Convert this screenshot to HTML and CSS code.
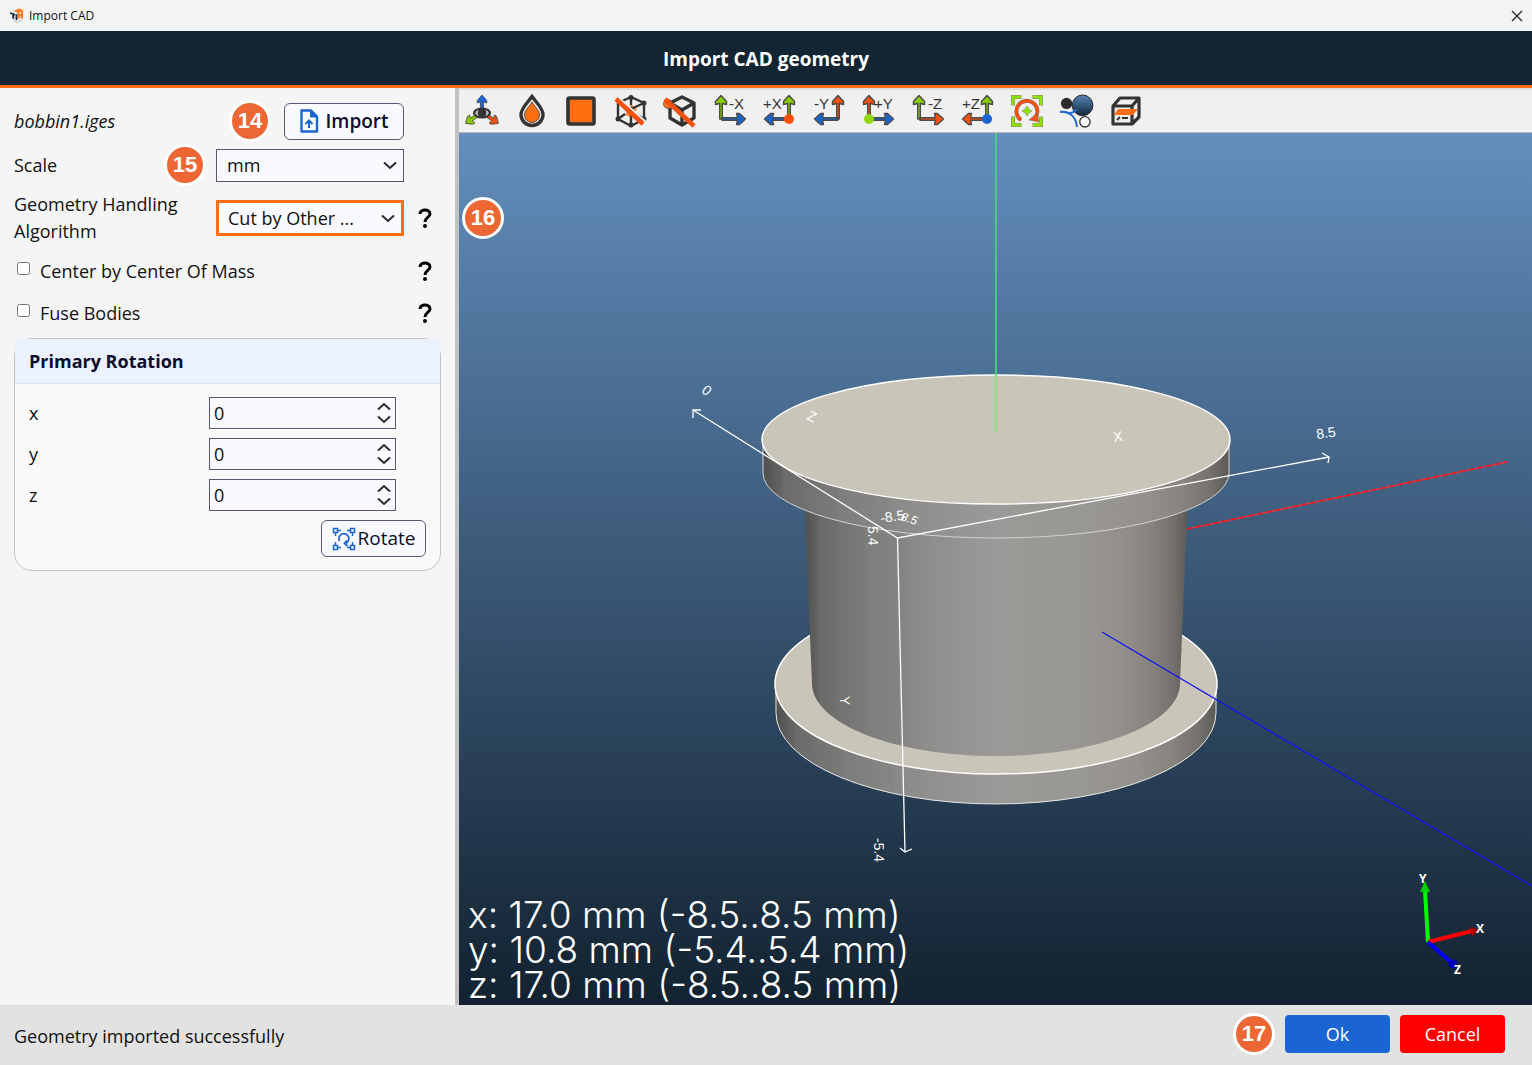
FILE: index.html
```html
<!DOCTYPE html>
<html lang="en">
<head>
<meta charset="utf-8">
<title>Import CAD</title>
<link rel="stylesheet" href="styles.css">
</head>
<body>
<svg class="defs" aria-hidden="true">
  <defs>
    <path id="arrow" d="M-1.300 0V-15.500L-5.500 -14.500V-17.500L0 -23.500L5.500 -17.500V-14.500L1.300 -15.500V0Z" stroke="#4a4a4a" stroke-width="1.400" stroke-linejoin="round"/>
    <path id="arrow-short" d="M-1.600 0V-8L-4.800 -7V-9.500L0 -15L4.800 -9.500V-7L1.600 -8V0Z" stroke="#4a4a4a" stroke-width=".8" stroke-linejoin="round"/>
    <path id="chevron" d="M1 1.500L7 7L13 1.500" fill="none" stroke="#2b2b2b" stroke-width="2"/>
  </defs>
</svg>

<div class="window">
  <div class="titlebar">
    <svg class="app-icon" viewBox="0 0 16 16" aria-hidden="true">
      <path d="M1 4.500L6.500 6V8L5.500 7.700V12L3.500 11V7L1 6.300Z" fill="#14283a"/>
      <path d="M7 6.500L9 7V13L7 12.500Z" fill="#14283a"/>
      <path d="M6 2.500L11 .5L15 2.500V12L12.500 10.500V8.500L11.500 8.200V12L9 10V5L6 4Z" fill="#ff7a1a"/>
      <path d="M11 4L13 4.500V6L11 6Z" fill="#f3f3f3"/>
      <path d="M5 13L9 15.300L14 12.500" fill="none" stroke="#a8b0b4"/>
    </svg>
    <span>Import CAD</span>
    <button class="close" aria-label="Close"><svg viewBox="0 0 12 12"><path d="M1 1L11 11M11 1L1 11" stroke="#222" stroke-width="1.200"/></svg></button>
  </div>

  <header class="header"><h1>Import CAD geometry</h1></header>

  <main class="main">
    <form class="panel" id="import-form">
      <div class="row row-file">
        <em class="file">bobbin1.iges</em>
        <div class="file-actions">
          <span class="step">14</span>
          <button type="button" class="btn btn-import">
            <svg viewBox="0 0 20 24" width="20" height="24" aria-hidden="true"><path d="M2.500 1.500H12L18 7.500V22.500H2.500Z" fill="none" stroke="#1b65d2" stroke-width="2.400" stroke-linejoin="round"/><path d="M11.500 1.500V8H18Z" fill="#1b65d2" stroke="#1b65d2"/><path d="M10 19V12M6.500 15L10 11.500L13.500 15" fill="none" stroke="#1b65d2" stroke-width="2"/></svg>
            Import
          </button>
        </div>
      </div>

      <div class="row">
        <div class="label-step"><label for="scale">Scale</label><span class="step">15</span></div>
        <div class="select"><select id="scale"><option>mm</option><option>cm</option><option>m</option></select><svg viewBox="0 0 14 9"><use href="#chevron"/></svg></div>
      </div>

      <div class="row row-tall">
        <label for="algorithm">Geometry Handling Algorithm</label>
        <div class="select select-focus"><select id="algorithm"><option>Cut by Other ...</option></select><svg viewBox="0 0 14 9"><use href="#chevron"/></svg></div>
        <button type="button" class="help" aria-label="About the algorithm"><svg viewBox="0 0 14 20"><path d="M2 6C2 0.500 12 0.500 12 6C12 9.500 7 9.500 7 14" fill="none" stroke="#000" stroke-width="3"/><circle cx="7" cy="18" r="2"/></svg></button>
      </div>

      <div class="row row-check">
        <label class="check"><input type="checkbox">Center by Center Of Mass</label>
        <button type="button" class="help" aria-label="About centering"><svg viewBox="0 0 14 20"><path d="M2 6C2 0.500 12 0.500 12 6C12 9.500 7 9.500 7 14" fill="none" stroke="#000" stroke-width="3"/><circle cx="7" cy="18" r="2"/></svg></button>
      </div>
      <div class="row row-check">
        <label class="check"><input type="checkbox">Fuse Bodies</label>
        <button type="button" class="help" aria-label="About fusing"><svg viewBox="0 0 14 20"><path d="M2 6C2 0.500 12 0.500 12 6C12 9.500 7 9.500 7 14" fill="none" stroke="#000" stroke-width="3"/><circle cx="7" cy="18" r="2"/></svg></button>
      </div>

      <section class="card">
        <h2>Primary Rotation</h2>
        <div class="card-body">
          <div class="axis-row"><label for="rx">x</label><div class="number"><input id="rx" type="number" value="0"><span class="spin"><svg class="flip" viewBox="0 0 14 9"><use href="#chevron"/></svg><svg viewBox="0 0 14 9"><use href="#chevron"/></svg></span></div></div>
          <div class="axis-row"><label for="ry">y</label><div class="number"><input id="ry" type="number" value="0"><span class="spin"><svg class="flip" viewBox="0 0 14 9"><use href="#chevron"/></svg><svg viewBox="0 0 14 9"><use href="#chevron"/></svg></span></div></div>
          <div class="axis-row"><label for="rz">z</label><div class="number"><input id="rz" type="number" value="0"><span class="spin"><svg class="flip" viewBox="0 0 14 9"><use href="#chevron"/></svg><svg viewBox="0 0 14 9"><use href="#chevron"/></svg></span></div></div>
          <button type="button" class="btn btn-rotate">
            <svg viewBox="0 0 24 24" width="24" height="24" fill="none" stroke="#1b65d2" stroke-width="1.500" aria-hidden="true"><path d="M1.500 1.500h4v4h-4zM18.500 1.500h4v4h-4zM1.500 18.500h4v4h-4zM18.500 18.500h4v4h-4zM6 3.500h3M15 3.500h3M6 20.500h3M15 20.500h3M3.500 6v3M3.500 15v3M20.500 6v3M20.500 15v3"/><path d="M7.500 14A5 5 0 1 1 13 16.500M15 13.500L12.500 16.500L15.500 19" stroke-width="1.800"/></svg>
            Rotate
          </button>
        </div>
      </section>
    </form>

    <div class="divider"></div>

    <section class="viewer">
      <div class="toolbar">
        <button class="tool" aria-label="Free view"><svg viewBox="0 0 32 32"><use href="#arrow-short" transform="translate(16 15)" fill="#1b65d2"/><use href="#arrow-short" transform="translate(12 20) rotate(236)" fill="#8c0"/><use href="#arrow-short" transform="translate(20 20) rotate(124)" fill="#f4510f"/><ellipse cx="16" cy="18" rx="9" ry="5.500" fill="#333"/><path d="M9 18Q10 15.500 12.500 14.800Q11 18 12.500 21.200Q10 20.500 9 18ZM19.500 14.800Q22 15.500 23 18Q22 20.500 19.500 21.200Q21 18 19.500 14.800Z" fill="#bbb"/></svg></button>
        <button class="tool" aria-label="Opacity"><svg viewBox="0 0 32 32"><path d="M16 1.500C19 6 27 13 27 19.500A11 11 0 0 1 5 19.500C5 13 13 6 16 1.500Z" fill="#eee" stroke="#333" stroke-width="3.400"/><path d="M16 7C18 11 23.500 15 23.500 20A7.500 7.500 0 0 1 8.500 20C8.500 15 14 11 16 7Z" fill="#ff6f0f" stroke="#333" stroke-width=".8"/></svg></button>
        <button class="tool" aria-label="Faces"><svg viewBox="0 0 32 32"><rect x="3" y="3" width="26" height="26" rx="1.500" fill="#ff6f0f" stroke="#333" stroke-width="3.600"/></svg></button>
        <button class="tool" aria-label="Hide vertices"><svg viewBox="0 0 32 32" fill="none" stroke="#333"><path d="M16 9L22 14L18 23L10 20Z" fill="#ff8c42" stroke="none"/><path d="M16 2L29 8V24L16 31L3 24V8ZM3 8L16 14L29 8M16 14V31M16 2V10M3 24L10 19M29 24L21 19" stroke-width="2.400"/><g fill="#333" stroke-width="2"><circle cx="16" cy="2.500" r="1.500"/><circle cx="29" cy="8" r="1.500"/><circle cx="29" cy="24" r="1.500"/><circle cx="16" cy="30" r="1.500"/><circle cx="3" cy="24" r="1.500"/><circle cx="16" cy="14" r="1.500"/></g><path d="M4 3L31 27" stroke="#eee" stroke-width="2"/><path d="M1 4L28 29" stroke="#f4510f" stroke-width="4.500"/></svg></button>
        <button class="tool" aria-label="Hide edges"><svg viewBox="0 0 32 32" fill="none" stroke="#333"><path d="M18 2L30 8V23L18 30L6 23V8ZM6 8L18 15L30 8M18 15V30" stroke-width="3.400" stroke-linejoin="round"/><circle cx="4" cy="9" r="4.500" fill="#f4741f" stroke="#555" stroke-width=".8"/><path d="M1 4L30 31" stroke="#f4510f" stroke-width="4.500"/></svg></button>
        <button class="tool" aria-label="View minus X"><svg viewBox="0 0 32 32"><use href="#arrow" transform="translate(7 24)" fill="#8c0"/><use href="#arrow" transform="translate(8 24) rotate(90)" fill="#1b65d2"/><text x="15" y="14">-X</text></svg></button>
        <button class="tool" aria-label="View plus X"><svg viewBox="0 0 32 32"><use href="#arrow" transform="translate(26 24)" fill="#8c0"/><use href="#arrow" transform="translate(25 24) rotate(270)" fill="#1b65d2"/><circle cx="26" cy="24" r="5" fill="#ff4d0a"/><text x="0" y="14">+X</text></svg></button>
        <button class="tool" aria-label="View minus Y"><svg viewBox="0 0 32 32"><use href="#arrow" transform="translate(25 24)" fill="#f4510f"/><use href="#arrow" transform="translate(25 24) rotate(270)" fill="#1b65d2"/><text x="1" y="14">-Y</text></svg></button>
        <button class="tool" aria-label="View plus Y"><svg viewBox="0 0 32 32"><use href="#arrow" transform="translate(7 24)" fill="#f4510f"/><use href="#arrow" transform="translate(8 24) rotate(90)" fill="#1b65d2"/><circle cx="7" cy="24" r="5" fill="#8fd60a"/><text x="12" y="14">+Y</text></svg></button>
        <button class="tool" aria-label="View minus Z"><svg viewBox="0 0 32 32"><use href="#arrow" transform="translate(7 24)" fill="#8c0"/><use href="#arrow" transform="translate(8 24) rotate(90)" fill="#f4510f"/><text x="16" y="14">-Z</text></svg></button>
        <button class="tool" aria-label="View plus Z"><svg viewBox="0 0 32 32"><use href="#arrow" transform="translate(26 24)" fill="#8c0"/><use href="#arrow" transform="translate(25 24) rotate(270)" fill="#f4510f"/><circle cx="26" cy="24" r="5" fill="#1b65d2"/><text x="1" y="14">+Z</text></svg></button>
        <button class="tool" aria-label="Reset view"><svg viewBox="0 0 32 32" fill="none"><path d="M2 10.500V2H10.500M21.500 2H30V10.500M30 21.500V30H21.500M10.500 30H2V21.500" stroke="#888" stroke-width="4"/><path d="M2 10V2H10M22 2H30V10M30 22V30H22M10 30H2V22" stroke="#8fe000" stroke-width="2.800"/><path d="M10 25A10.500 10.500 0 1 1 24 23" stroke="#777" stroke-width="4"/><path d="M10 25A10.500 10.500 0 1 1 24 23" stroke="#f4510f" stroke-width="3"/><path d="M18 25L28 27L26 18Z" fill="#f4510f" stroke="#777" stroke-width=".6"/><path d="M16 11L18 14L21 16L18 18L16 21L14 18L11 16L14 14Z" fill="#8fe000" stroke="#999" stroke-width=".8"/></svg></button>
        <button class="tool" aria-label="Background"><svg viewBox="0 0 34 34"><defs><linearGradient id="ball" x2="0" y2="1"><stop stop-color="#5585b7"/><stop offset="1" stop-color="#14283a"/></linearGradient></defs><circle cx="7" cy="9" r="6" fill="#2b2b2b"/><circle cx="24" cy="11" r="11" fill="url(#ball)" stroke="#222"/><path d="M0 18C9 17 17 22 18 34M8 19.500Q15 19 18 15" fill="none" stroke="#1b65d2" stroke-width="2"/><circle cx="26.500" cy="28.500" r="5.500" fill="#fff" stroke="#333" stroke-width="1.400"/></svg></button>
        <button class="tool" aria-label="Clip plane"><svg viewBox="0 0 32 32" fill="none" stroke="#333" stroke-width="3.200"><path d="M3 11H22V29H3ZM3 11L10 3H29V22L22 29M22 11L29 3" stroke-linejoin="round"/><path d="M7 25L10 22M12 23H18" stroke-width="2"/><path d="M4 20L8 14H28L23 20Z" fill="#ff6f0f" stroke="none"/></svg></button>
      </div>

      <div class="canvas">
        <svg class="scene" viewBox="0 0 1073 872" role="img" aria-label="Bobbin model">
          <defs>
            <linearGradient id="metal">
              <stop stop-color="#50504f"/><stop offset=".04" stop-color="#656564"/><stop offset=".04" stop-color="#6a6a69"/><stop offset=".1" stop-color="#737372"/><stop offset=".16" stop-color="#7a7a79"/><stop offset=".16" stop-color="#7d7d7c"/><stop offset=".27" stop-color="#868685"/><stop offset=".27" stop-color="#898987"/><stop offset=".4" stop-color="#949391"/><stop offset=".5" stop-color="#9b9a98"/><stop offset=".7" stop-color="#999793"/><stop offset=".82" stop-color="#94918d"/><stop offset=".9" stop-color="#87847f"/><stop offset=".96" stop-color="#75726e"/><stop offset="1" stop-color="#5c5a56"/>
            </linearGradient>
          </defs>
          <g stroke="#e8e8e6" stroke-width="1">
            <path d="M317 551V580A220 91 0 0 0 757 580V551Z" fill="url(#metal)"/>
            <ellipse cx="537" cy="551" rx="221" ry="90" fill="#c9c5b9" stroke="#fff" stroke-width="1.500"/>
          </g>
          <path d="M345 360L353 550C353 591 436 623 537 623C638 623 721 591 721 550L729 360Z" fill="url(#metal)"/>
          <path d="M304 307V340A233 65 0 0 0 770 340V307Z" fill="url(#metal)" stroke="#d2d2d0"/>
          <ellipse cx="537" cy="306.500" rx="234" ry="64.500" fill="#c9c5b9" stroke="#fff" stroke-width="1.500"/>
          <path d="M537 0V242" stroke="#43d47c" stroke-width="1.800"/><path d="M537 242V299" stroke="#86e67b" stroke-width="1.800"/>
          <path d="M728 396L1048 329" stroke="#e0354a" stroke-width="1.600"/><path d="M728 396L1048 329" stroke="#f01818" stroke-width="1.600" stroke-dasharray="5 4"/>
          <path d="M643 499L1073 753" stroke="#1414f4" stroke-width="1.300"/>
          <g fill="none" stroke="#fff" stroke-width="1.300">
            <path d="M234 277L438.500 405L870 324M438.500 405L446 719"/>
            <path d="M234 285V277H242M863 320L870 324L869 330M441 715L446 719L453 716"/>
          </g>
          <g class="ticks">
            <text transform="translate(242 260) rotate(25)" font-style="italic">0</text>
            <text transform="translate(347 286) rotate(25)">Z</text>
            <text transform="translate(655 309) rotate(-8)">X</text>
            <text transform="translate(858 306) rotate(-8)">8.5</text>
            <text transform="translate(422 390) rotate(-8)">-8.5</text>
            <text transform="translate(441 387) rotate(18)" class="tick-small">8.5</text>
            <text transform="translate(409 393) rotate(89)">5.4</text>
            <text transform="translate(415 705) rotate(89)">-5.4</text>
            <text transform="translate(381 563) rotate(89)">Y</text>
          </g>
        </svg>

        <span class="step step-canvas">16</span>

        <div class="dimensions">
          <div>x: 17.0 mm (-8.5..8.5 mm)</div>
          <div>y: 10.8 mm (-5.4..5.4 mm)</div>
          <div>z: 17.0 mm (-8.5..8.5 mm)</div>
        </div>

        <svg class="triad" viewBox="0 0 80 110" aria-hidden="true">
          <path d="M18 72L15 20" stroke="#0f0" stroke-width="4"/><path d="M10 22L15 11L20 22Z" fill="#00d000"/>
          <path d="M18 72L62 61" stroke="#f00" stroke-width="4"/><path d="M60 57L70 60L62 66Z" fill="#b00000"/>
          <path d="M18 72L42 93" stroke="#00f" stroke-width="4"/><circle cx="43" cy="94" r="4.500" fill="#0000b8"/>
          <text x="9" y="13">Y</text><text x="66" y="63">X</text><text x="44" y="104">Z</text>
        </svg>
      </div>
    </section>
  </main>

  <footer class="footer">
    <output>Geometry imported successfully</output>
    <span class="step">17</span>
    <button class="action ok">Ok</button>
    <button class="action cancel">Cancel</button>
  </footer>
</div>
</body>
</html>
```

FILE: styles.css
```css
* { box-sizing: border-box; }

body {
  margin: 0;
  font-family: "Open Sans", "Noto Sans", sans-serif;
  font-size: 18px;
  line-height: 27px;
  color: #111;
}

button, input, select { font: inherit; color: inherit; margin: 0; }
button { cursor: pointer; }
h1, h2 { margin: 0; }
svg { display: block; }
.defs { position: absolute; width: 0; height: 0; }

.window {
  display: grid;
  grid-template-rows: 31px 57px 1fr 60px;
  min-height: 100vh;
}

.titlebar {
  display: flex;
  align-items: center;
  gap: 5px;
  padding: 0 9px;
  background: #f3f3f3;
  font-size: 12px;
  line-height: 16px;
}
.app-icon { width: 15px; height: 15px; }
.close { margin-left: auto; padding: 0; border: 0; background: none; }
.close svg { width: 12px; height: 12px; }

.header {
  display: flex;
  align-items: center;
  justify-content: center;
  padding-top: 2px;
  background: #132433;
  border-bottom: 3px solid #ff6f0f;
  color: #fff;
}
.header h1 { font-size: 19px; font-weight: 700; line-height: 27px; }

.main { display: grid; grid-template-columns: minmax(320px, 455px) 4px 1fr; }
.divider { background: #c2c2c2; }

.panel { padding: 12px 14px; background: #f5f5f5; }
.row {
  display: grid;
  grid-template-columns: 202px 188px 1fr;
  align-items: center;
  min-height: 42px;
  margin-bottom: 2px;
}
.row-file { grid-template-columns: 202px 188px; }
.file-actions { display: flex; justify-content: flex-end; align-items: center; gap: 13px; }
.label-step { display: flex; align-items: center; justify-content: space-between; padding-right: 10px; }
.row-tall { min-height: 62px; margin: 0; padding-bottom: 2px; }
.row-check { grid-template-columns: 390px 1fr; margin: 0; }

.step {
  display: flex;
  flex: none;
  align-items: center;
  justify-content: center;
  width: 42px;
  height: 42px;
  border: 3px solid #fff;
  border-radius: 50%;
  background: #ec6733;
  color: #fff;
  font: bold 22px/24px "Liberation Sans", Arial, sans-serif;
}

.btn {
  display: flex;
  align-items: center;
  justify-content: center;
  height: 37px;
  padding: 0;
  border: 1px solid #59566f;
  border-radius: 6px;
  background: #f9faff;
  color: #0d0d2b;
  font-size: 19px;
}
.btn-import { flex: none; width: 120px; gap: 6px; font-weight: 600; }
.btn-rotate { width: 105px; gap: 2px; margin-left: auto; font-weight: 500; }

.select { position: relative; }
.select select {
  display: block;
  width: 100%;
  height: 33px;
  padding: 0 32px 0 10px;
  border: 1px solid #59566f;
  border-radius: 0;
  background: #f9faff;
  appearance: none;
}
.select svg { position: absolute; right: 7px; top: 50%; width: 14px; height: 9px; margin-top: -4px; pointer-events: none; }
.select-focus select { height: 36px; padding-left: 9px; border: 3px solid #ff6f0f; }
.select-focus svg { right: 9px; }

.help { justify-self: start; margin-left: 14px; padding: 0; border: 0; background: none; }
.help svg { width: 14px; height: 20px; }

.check { display: flex; gap: 10px; }
.check input { width: 13px; height: 13px; margin: 4px 0 0 3px; }

.card {
  margin-top: 4px;
  border: 1px solid #c2c2c2;
  border-radius: 18px;
  background: #f9f9f9;
}
.card h2 {
  padding: 9px 14px 8px;
  border-bottom: 1px solid #dbe2ee;
  background: #ebf2fe;
  color: #0d0d2b;
  font-size: 18px;
  font-weight: 700;
  line-height: 27px;
}
.card-body { padding: 13px 14px; }
.axis-row { display: grid; grid-template-columns: 180px 187px; align-items: center; margin-bottom: 9px; }
.number { position: relative; }
.number input {
  display: block;
  width: 100%;
  height: 32px;
  padding: 0 30px 0 4px;
  border: 1px solid #59566f;
  background: #f9faff;
  appearance: textfield;
}
.number input::-webkit-inner-spin-button { appearance: none; }
.spin { position: absolute; right: 5px; top: 5px; display: grid; gap: 4px; pointer-events: none; }
.spin svg { width: 14px; height: 9px; }
.spin .flip { transform: rotate(180deg); }

.viewer { display: flex; flex-direction: column; min-width: 0; }
.toolbar {
  display: flex;
  justify-content: space-between;
  align-items: center;
  height: 45px;
  padding: 0 390px 0 7px;
  background: #f0f0f0;
  border-top: 2px solid #ddd;
  border-bottom: 1px solid #b9b9b9;
}
.tool { flex: none; width: 32px; height: 32px; padding: 0; border: 0; background: none; }
.tool svg { width: 32px; height: 32px; overflow: visible; }
.tool text { font: 15px "Liberation Sans", Arial, sans-serif; fill: #333; stroke: none; }

.canvas {
  position: relative;
  flex: 1;
  min-height: 480px;
  overflow: hidden;
  background: linear-gradient(#638ebd, #122230);
}
.scene { position: absolute; inset: 0; width: 100%; height: 100%; overflow: visible; }
.ticks { font: 14px "Liberation Sans", Arial, sans-serif; fill: #fff; }
.tick-small { font-size: 12px; font-style: italic; }
.step-canvas { position: absolute; left: 3px; top: 64px; }
.dimensions {
  position: absolute;
  left: 9px;
  bottom: 3px;
  color: #fff;
  font-family: Inter, Lato, sans-serif;
  font-size: 37px;
  font-weight: 300;
  line-height: 35px;
  white-space: nowrap;
}
.triad { position: absolute; right: 42px; bottom: 25px; width: 80px; height: 110px; overflow: visible; }
.triad text { font: bold 12px "Open Sans", sans-serif; fill: #fff; }

.footer {
  display: flex;
  align-items: center;
  gap: 10px;
  padding: 0 27px 2px 14px;
  background: #e2e2e2;
}
.footer output { margin-right: auto; padding-top: 4px; }
.action { width: 105px; height: 38px; padding: 0; border: 0; border-radius: 4px; color: #fff; font-weight: 500; }
.ok { background: #1b65d2; }
.cancel { background: #f00; }
```
